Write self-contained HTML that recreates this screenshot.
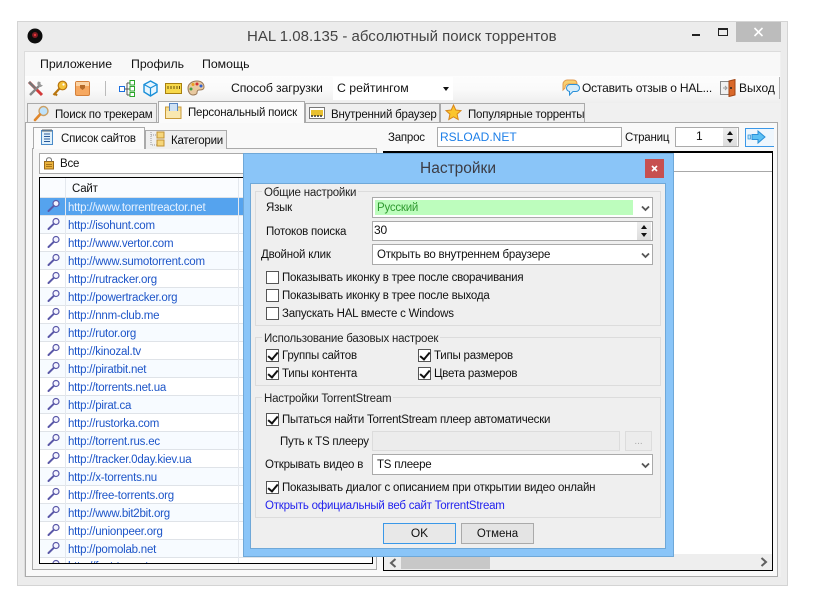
<!DOCTYPE html>
<html><head><meta charset="utf-8"><style>
html,body{margin:0;padding:0;background:#fff;width:821px;height:610px;overflow:hidden}
body{position:relative;font:11.5px/16px "Liberation Sans",sans-serif;color:#111}
div,svg{position:absolute;box-sizing:border-box}
.t{white-space:nowrap;height:16px;letter-spacing:-.22px;margin-top:1px}
.w{font-size:12.3px;letter-spacing:0;margin-top:0}
.n{margin-top:0}
.b{border:1px solid #aaa;background:#fff}
.u{color:#1d55c8}
.cb{width:13px;height:13px;border:1px solid #555;background:#fff}
.ck:after{content:"";position:absolute;left:3px;top:0px;width:4px;height:8px;border:solid #111;border-width:0 2px 2px 0;transform:rotate(40deg)}
.g{border:1px solid #dcdcdc}
.gl{background:#efefef;padding:0 2px;color:#222}
.row{left:40px;width:332px;height:18px;border-bottom:1px solid #dfe3e8}
</style></head><body>
<svg width="0" height="0" style="position:absolute"><defs>
<symbol id="m" viewBox="0 0 16 16"><circle cx="11" cy="4.500" r="3" fill="#f4f4ff" stroke="#5a58a8" stroke-width="1.200"/><path d="M8.800 6.800L3.500 12" stroke="#5a58a8" stroke-width="2" stroke-linecap="round"/></symbol>
</defs></svg>

<!-- window -->
<div style="left:17px;top:21px;width:771px;height:565px;background:#ececec;border:1px solid #d4d4d4"></div>
<svg style="left:27px;top:28px" width="16" height="16"><circle cx="8" cy="8" r="7.500" fill="#0c0c0c"/><circle cx="8" cy="7" r="3" fill="#7c1a22"/><circle cx="8" cy="7" r="1.200" fill="#e23a3a"/></svg>
<div class="t n" style="left:247px;top:27px;font-size:15px;line-height:20px;height:20px;color:#444;width:312px;letter-spacing:0">HAL 1.08.135 - абсолютный поиск торрентов</div>
<div style="left:692px;top:34px;width:8px;height:2px;background:#222"></div>
<div style="left:718px;top:28px;width:10px;height:8px;border:1px solid #222;border-top-width:2px"></div>
<div style="left:736px;top:22px;width:45px;height:20px;background:#bcbcbc"></div>
<svg style="left:753px;top:27px" width="11" height="10"><path d="M1.500 1L9.500 9M9.500 1L1.500 9" stroke="#fff" stroke-width="1.600"/></svg>

<!-- client -->
<div style="left:24px;top:51px;width:757px;height:526px;background:#f0f0f0;border-top:1px solid #dcdcdc;border-left:1px solid #dcdcdc"></div>
<div style="left:25px;top:52px;width:755px;height:24px;background:#f8f8f8"></div>
<div class="t w" style="left:40px;top:56px">Приложение</div>
<div class="t w" style="left:131px;top:56px">Профиль</div>
<div class="t w" style="left:202px;top:56px">Помощь</div>

<!-- toolbar -->
<div style="left:25px;top:76px;width:755px;height:27px;background:linear-gradient(#fdfdfd,#fafafa 50%,#eeeeee)"></div>
<svg style="left:27px;top:80px" width="18" height="18"><path d="M2 2L15 15" stroke="#d23a3a" stroke-width="3"/><path d="M2 2L8 8" stroke="#777" stroke-width="2.400"/><path d="M3 15L13 5" stroke="#888" stroke-width="2.400"/><path d="M11 1.500a3.500 3.500 0 0 0 3 5.500l2-2-1.500 0-1-1 0-2z" fill="#999"/></svg>
<svg style="left:51px;top:80px" width="17" height="18"><circle cx="11.500" cy="5.500" r="4.300" fill="#f5c23a" stroke="#b8750f" stroke-width="1.200"/><circle cx="12.500" cy="4.500" r="1.100" fill="#fff"/><path d="M8.500 8.500L2.500 15M4 13.500l2 2" stroke="#b8750f" stroke-width="2.200"/></svg>
<svg style="left:75px;top:81px" width="15" height="15"><rect x=".5" y=".5" width="14" height="14" rx="1.500" fill="#f6a860" stroke="#d4803a"/><rect x="1" y="1" width="13" height="4" fill="#fbd3a4"/><path d="M5 4h5v3l-2.500 2-2.500-2z" fill="#b56a28"/></svg>
<div style="left:105px;top:81px;width:1px;height:15px;background:#bbb"></div>
<svg style="left:119px;top:80px" width="16" height="17"><rect x=".5" y="6.500" width="5" height="5" fill="#fff" stroke="#1a6fe0"/><path d="M5.500 9H8M8 3v12M8 3h3M8 9h3M8 15h3" stroke="#555" fill="none"/><rect x="11" y=".5" width="4.500" height="4.500" fill="#fff" stroke="#2aa52a"/><rect x="11" y="6.500" width="4.500" height="4.500" fill="#fff" stroke="#2aa52a"/><rect x="11" y="12.500" width="4.500" height="4" fill="#fff" stroke="#2aa52a"/></svg>
<svg style="left:143px;top:80px" width="15" height="17"><path d="M7.500 1L14 4.500V12L7.500 16 1 12V4.500z" fill="#e8f6ff" stroke="#1a8fd8" stroke-width="1.400"/><path d="M1 4.500L7.500 8 14 4.500M7.500 8V16" fill="none" stroke="#1a8fd8" stroke-width="1.200"/></svg>
<svg style="left:165px;top:83px" width="17" height="11"><rect x=".5" y=".5" width="16" height="10" fill="#f7d84a" stroke="#a88010"/><path d="M3 3v3M6 3v3M9 3v3M12 3v3M14.500 3v3" stroke="#6a5008"/></svg>
<svg style="left:187px;top:80px" width="18" height="16"><path d="M1 8c0-4 4-7 9-7s7 3 7 6-3 3-5 3-2 2-2 3-2 2-4 2c-3 0-5-3-5-7z" fill="#e8c9a0" stroke="#9a7a58"/><circle cx="10" cy="4" r="1.500" fill="#d83030"/><circle cx="14" cy="6" r="1.500" fill="#3060d0"/><circle cx="6" cy="4.500" r="1.500" fill="#e8a020"/><circle cx="4" cy="9" r="1.500" fill="#40a040"/></svg>
<div class="t w" style="left:231px;top:80px;letter-spacing:-.13px">Способ загрузки</div>
<div style="left:333px;top:77px;width:120px;height:23px;background:#fff"></div>
<div class="t w" style="left:337px;top:80px">С рейтингом</div>
<div style="left:443px;top:87px;border:3.500px solid transparent;border-top:4px solid #111;border-bottom:0"></div>
<svg style="left:562px;top:79px" width="18" height="18"><path d="M5 1h6c3 0 4 2 4 4H7c-3 0-4 2-4 4L1 11V5c0-2 2-4 4-4z" fill="#f8d070" stroke="#e09a50"/><path d="M8 5.500h6c2 0 3.500 1.500 3.500 3.500s-1.500 3.500-3.500 3.500h-3L7.500 16v-3.500C5.500 12 4.500 10.500 4.500 9S6 5.500 8 5.500z" fill="#d4ecfb" stroke="#2a90d8"/></svg>
<div class="t n" style="left:582px;top:80px;width:132px;font-size:12px;letter-spacing:-.2px">Оставить отзыв о HAL...</div>
<svg style="left:720px;top:79px" width="17" height="18"><rect x=".5" y="2.500" width="9" height="13" fill="#f0f0f0" stroke="#888"/><path d="M3 9h3M5 7l2 2-2 2" stroke="#999" fill="none"/><path d="M9 2l6-1.500V16l-6 1.500z" fill="#d9682a" stroke="#a04414"/><circle cx="11" cy="9" r="1" fill="#222"/></svg>
<div class="t n" style="left:739px;top:80px;font-size:12px;letter-spacing:0">Выход</div>
<div style="left:779px;top:77px;width:1px;height:22px;background:#b4b4b4"></div>

<!-- main tab panel -->
<div style="left:25px;top:122px;width:753px;height:455px;background:#f9f9f9;border:1px solid #aaa"></div>
<div style="left:27px;top:103px;width:130px;height:19px;background:#efefef;border:1px solid #aaa;border-bottom:0"></div>
<svg style="left:33px;top:105px" width="17" height="17"><circle cx="10.500" cy="6" r="4.500" fill="#bfe2fa" stroke="#caa066" stroke-width="1.400"/><path d="M7 9.500L2 15" stroke="#e0862a" stroke-width="2.600" stroke-linecap="round"/></svg>
<div class="t" style="left:55px;top:106px">Поиск по трекерам</div>
<div style="left:158px;top:101px;width:147px;height:22px;background:#fbfbfb;border:1px solid #aaa;border-bottom:0"></div>
<svg style="left:165px;top:103px" width="17" height="16"><rect x=".5" y="4" width="15.500" height="11.500" fill="#f6dc90" stroke="#c89a38"/><rect x="4.500" y=".5" width="8" height="9" fill="#cfe2f5" stroke="#5a86c0"/><rect x="1" y="8" width="14.500" height="7" fill="#f9e8b0"/></svg>
<div class="t" style="left:188px;top:104px">Персональный поиск</div>
<div style="left:305px;top:103px;width:135px;height:19px;background:#efefef;border:1px solid #aaa;border-bottom:0"></div>
<svg style="left:309px;top:107px" width="16" height="12"><rect x=".5" y=".5" width="15" height="11" fill="#fff" stroke="#777"/><rect x="2" y="3" width="12" height="6" fill="#e8c030"/><path d="M2 9h12" stroke="#333" stroke-width="1.500" stroke-dasharray="2 1"/></svg>
<div class="t" style="left:331px;top:106px">Внутренний браузер</div>
<div style="left:440px;top:103px;width:145px;height:19px;background:#efefef;border:1px solid #aaa;border-bottom:0"></div>
<svg style="left:445px;top:104px" width="17" height="17"><path d="M8.500 1l2.300 5 5.200.6-3.900 3.500 1.100 5.400-4.700-2.700-4.700 2.700 1.100-5.400L1 6.600 6.200 6z" fill="#fbc52c" stroke="#d8861a"/></svg>
<div class="t" style="left:468px;top:106px">Популярные торренты</div>

<!-- left subtabs -->
<div style="left:32px;top:148px;width:345px;height:422px;background:#f6f6f6;border:1px solid #aaa"></div>
<div style="left:145px;top:130px;width:82px;height:19px;background:#efefef;border:1px solid #aaa;border-bottom:0"></div>
<div style="left:33px;top:127px;width:112px;height:22px;background:#fbfbfb;border:1px solid #aaa;border-bottom:0"></div>
<svg style="left:41px;top:129px" width="13" height="16"><rect x=".5" y="1.500" width="11" height="14" fill="#dff0fb" stroke="#4a8ac8"/><path d="M3 5h6M3 7.500h6M3 10h6M3 12.500h6" stroke="#2a5a9a"/><path d="M2 0v3M4 0v3M6 0v3M8 0v3M10 0v3" stroke="#666"/></svg>
<div class="t" style="left:61px;top:130px">Список сайтов</div>
<svg style="left:150px;top:131px" width="15" height="16"><path d="M1 1v13h6M1 4h6" stroke="#999" stroke-dasharray="1 1" fill="none"/><rect x="7" y="1" width="7" height="6" fill="#f6d67a" stroke="#c09030"/><rect x="7" y="9" width="7" height="6" fill="#f6d67a" stroke="#c09030"/></svg>
<div class="t" style="left:171px;top:132px">Категории</div>
<div class="b" style="left:39px;top:153px;width:334px;height:21px"></div>
<svg style="left:44px;top:157px" width="11" height="13"><rect x=".5" y="4.500" width="9" height="7.500" fill="#eab33c" stroke="#9a6a1a"/><path d="M2.500 4.500V3c0-3 5-3 5 0v1.500" fill="none" stroke="#777"/><path d="M2 7.500h6M2 9.500h6" stroke="#a8741c"/></svg>
<div class="t" style="left:60px;top:155px">Все</div>

<!-- left grid -->
<div style="left:39px;top:177px;width:334px;height:387px;background:#fff;border:1px solid #000;overflow:hidden"></div>
<div style="left:40px;top:178px;width:332px;height:20px;background:#fafcff;border-bottom:1px solid #dfe3e8"></div>
<div class="t" style="left:72px;top:180px">Сайт</div>

<div class="row" style="top:198px;background:#55a3ee"></div>
<div class="row" style="top:216px;background:#f7fbff"></div>
<div class="row" style="top:234px"></div>
<div class="row" style="top:252px;background:#f7fbff"></div>
<div class="row" style="top:270px"></div>
<div class="row" style="top:288px;background:#f7fbff"></div>
<div class="row" style="top:306px"></div>
<div class="row" style="top:324px;background:#f7fbff"></div>
<div class="row" style="top:342px"></div>
<div class="row" style="top:360px;background:#f7fbff"></div>
<div class="row" style="top:378px"></div>
<div class="row" style="top:396px;background:#f7fbff"></div>
<div class="row" style="top:414px"></div>
<div class="row" style="top:432px;background:#f7fbff"></div>
<div class="row" style="top:450px"></div>
<div class="row" style="top:468px;background:#f7fbff"></div>
<div class="row" style="top:486px"></div>
<div class="row" style="top:504px;background:#f7fbff"></div>
<div class="row" style="top:522px"></div>
<div class="row" style="top:540px;background:#f7fbff"></div>
<div style="left:65px;top:178px;width:1px;height:385px;background:#e4e8ee"></div>
<div style="left:238px;top:178px;width:1px;height:385px;background:#e4e8ee"></div>

<svg style="left:45px;top:199px" width="16" height="16"><use href="#m"/></svg>
<svg style="left:45px;top:217px" width="16" height="16"><use href="#m"/></svg>
<svg style="left:45px;top:235px" width="16" height="16"><use href="#m"/></svg>
<svg style="left:45px;top:253px" width="16" height="16"><use href="#m"/></svg>
<svg style="left:45px;top:271px" width="16" height="16"><use href="#m"/></svg>
<svg style="left:45px;top:289px" width="16" height="16"><use href="#m"/></svg>
<svg style="left:45px;top:307px" width="16" height="16"><use href="#m"/></svg>
<svg style="left:45px;top:325px" width="16" height="16"><use href="#m"/></svg>
<svg style="left:45px;top:343px" width="16" height="16"><use href="#m"/></svg>
<svg style="left:45px;top:361px" width="16" height="16"><use href="#m"/></svg>
<svg style="left:45px;top:379px" width="16" height="16"><use href="#m"/></svg>
<svg style="left:45px;top:397px" width="16" height="16"><use href="#m"/></svg>
<svg style="left:45px;top:415px" width="16" height="16"><use href="#m"/></svg>
<svg style="left:45px;top:433px" width="16" height="16"><use href="#m"/></svg>
<svg style="left:45px;top:451px" width="16" height="16"><use href="#m"/></svg>
<svg style="left:45px;top:469px" width="16" height="16"><use href="#m"/></svg>
<svg style="left:45px;top:487px" width="16" height="16"><use href="#m"/></svg>
<svg style="left:45px;top:505px" width="16" height="16"><use href="#m"/></svg>
<svg style="left:45px;top:523px" width="16" height="16"><use href="#m"/></svg>
<svg style="left:45px;top:541px" width="16" height="16"><use href="#m"/></svg>

<div class="t" style="left:68px;top:199px;color:#e8f2ff">http://www.torrentreactor.net</div>
<div class="t u" style="left:68px;top:217px">http://isohunt.com</div>
<div class="t u" style="left:68px;top:235px">http://www.vertor.com</div>
<div class="t u" style="left:68px;top:253px">http://www.sumotorrent.com</div>
<div class="t u" style="left:68px;top:271px">http://rutracker.org</div>
<div class="t u" style="left:68px;top:289px">http://powertracker.org</div>
<div class="t u" style="left:68px;top:307px">http://nnm-club.me</div>
<div class="t u" style="left:68px;top:325px">http://rutor.org</div>
<div class="t u" style="left:68px;top:343px">http://kinozal.tv</div>
<div class="t u" style="left:68px;top:361px">http://piratbit.net</div>
<div class="t u" style="left:68px;top:379px">http://torrents.net.ua</div>
<div class="t u" style="left:68px;top:397px">http://pirat.ca</div>
<div class="t u" style="left:68px;top:415px">http://rustorka.com</div>
<div class="t u" style="left:68px;top:433px">http://torrent.rus.ec</div>
<div class="t u" style="left:68px;top:451px">http://tracker.0day.kiev.ua</div>
<div class="t u" style="left:68px;top:469px">http://x-torrents.nu</div>
<div class="t u" style="left:68px;top:487px">http://free-torrents.org</div>
<div class="t u" style="left:68px;top:505px">http://www.bit2bit.org</div>
<div class="t u" style="left:68px;top:523px">http://unionpeer.org</div>
<div class="t u" style="left:68px;top:541px">http://pomolab.net</div>
<div style="left:45px;top:559px;width:16px;height:4px;overflow:hidden"><svg style="left:0;top:0" width="16" height="16"><use href="#m"/></svg></div>
<div style="left:68px;top:559px;width:100px;height:4px;overflow:hidden"><div class="t u n" style="left:0;top:0">http://fast-torrent</div></div>

<!-- right -->
<div class="t n" style="left:388px;top:130px">Запрос</div>
<div class="b" style="left:437px;top:127px;width:185px;height:20px"></div>
<div class="t n" style="left:440px;top:129px;color:#1d7fe8;font-size:12px;letter-spacing:0">RSLOAD.NET</div>
<div class="t n" style="left:625px;top:130px">Страниц</div>
<div class="b" style="left:675px;top:127px;width:64px;height:20px"></div>
<div class="t n" style="left:696px;top:128px;font-size:12px">1</div>
<div style="left:723px;top:128px;width:14px;height:18px;background:linear-gradient(#eee,#ddd)"></div>
<div style="left:727px;top:131px;border:3px solid transparent;border-bottom:4px solid #111;border-top:0"></div>
<div style="left:727px;top:139px;border:3px solid transparent;border-top:4px solid #111;border-bottom:0"></div>
<div style="left:745px;top:128px;width:29px;height:19px;background:#eef6fd;border:1px solid #3a98e8;border-right:0"></div>
<svg style="left:747px;top:130px" width="20" height="15"><rect x="1" y="5" width="2.500" height="4" fill="#bfe4fa" stroke="#2a90d8" stroke-width=".7"/><path d="M5 4.500h6V1l7 6-7 6V9.500H5z" fill="#5cc0f4" stroke="#2a90d8"/></svg>
<div style="left:383px;top:151px;width:390px;height:420px;background:#fff;border:1px solid #000;border-width:2px 1px 1px 1px"></div>
<div style="left:384px;top:171px;width:388px;height:1px;background:#a8a8a8"></div>
<div style="left:384px;top:554px;width:388px;height:16px;background:#eee"></div>
<svg style="left:389px;top:558px" width="8" height="10"><path d="M6.500 1L2 5 6.500 9" fill="none" stroke="#606060" stroke-width="2"/></svg>
<div style="left:401px;top:557px;width:89px;height:12px;background:#c8c8c8"></div>
<svg style="left:760px;top:557px" width="8" height="10"><path d="M1.500 1L6 5 1.500 9" fill="none" stroke="#606060" stroke-width="2"/></svg>

<!-- dialog -->
<div style="left:243px;top:153px;width:431px;height:404px;background:#8ac5f8;border:1px solid #6fa8d8"></div>
<div class="t n" style="left:420px;top:159px;font-size:15.500px;line-height:20px;height:20px;color:#3c3c44;letter-spacing:0">Настройки</div>
<div style="left:645px;top:159px;width:19px;height:19px;background:#c75050"></div>
<svg style="left:651px;top:165px" width="7" height="7"><path d="M1 1L6 6M6 1L1 6" stroke="#fff" stroke-width="1.600"/></svg>
<div style="left:250px;top:183px;width:416px;height:366px;background:#efefef;border:1px solid #6fa8d8"></div>

<div class="g" style="left:255px;top:191px;width:406px;height:135px"></div>
<div class="t gl" style="left:262px;top:184px">Общие настройки</div>
<div class="t" style="left:266px;top:199px">Язык</div>
<div class="b" style="left:372px;top:197px;width:281px;height:21px"></div>
<div style="left:375px;top:200px;width:258px;height:15px;background:#bdfdbd"></div>
<div class="t" style="left:377px;top:199px;color:#2f9a2f">Русский</div>
<svg style="left:641px;top:205px" width="9" height="7"><path d="M1 1.500L4.500 5 8 1.500" fill="none" stroke="#555" stroke-width="1.800"/></svg>
<div class="t" style="left:266px;top:223px">Потоков поиска</div>
<div class="b" style="left:372px;top:221px;width:281px;height:20px"></div>
<div class="t n" style="left:374px;top:222px;font-size:12px">30</div>
<div style="left:637px;top:222px;width:14px;height:18px;background:linear-gradient(#eee,#ddd)"></div>
<div style="left:641px;top:225px;border:3px solid transparent;border-bottom:4px solid #111;border-top:0"></div>
<div style="left:641px;top:233px;border:3px solid transparent;border-top:4px solid #111;border-bottom:0"></div>
<div class="t" style="left:261px;top:246px">Двойной клик</div>
<div class="b" style="left:372px;top:244px;width:281px;height:21px"></div>
<div class="t" style="left:377px;top:246px">Открыть во внутреннем браузере</div>
<svg style="left:641px;top:252px" width="9" height="7"><path d="M1 1.500L4.500 5 8 1.500" fill="none" stroke="#555" stroke-width="1.800"/></svg>
<div class="cb" style="left:266px;top:271px"></div><div class="t" style="left:282px;top:269px">Показывать иконку в трее после сворачивания</div>
<div class="cb" style="left:266px;top:289px"></div><div class="t" style="left:282px;top:287px">Показывать иконку в трее после выхода</div>
<div class="cb" style="left:266px;top:307px"></div><div class="t" style="left:282px;top:305px">Запускать HAL вместе с Windows</div>

<div class="g" style="left:255px;top:337px;width:406px;height:49px"></div>
<div class="t gl" style="left:262px;top:330px">Использование базовых настроек</div>
<div class="cb ck" style="left:266px;top:349px"></div><div class="t" style="left:282px;top:347px">Группы сайтов</div>
<div class="cb ck" style="left:418px;top:349px"></div><div class="t" style="left:434px;top:347px">Типы размеров</div>
<div class="cb ck" style="left:266px;top:367px"></div><div class="t" style="left:282px;top:365px">Типы контента</div>
<div class="cb ck" style="left:418px;top:367px"></div><div class="t" style="left:434px;top:365px">Цвета размеров</div>

<div class="g" style="left:255px;top:397px;width:406px;height:121px"></div>
<div class="t gl" style="left:262px;top:390px">Настройки TorrentStream</div>
<div class="cb ck" style="left:266px;top:413px"></div><div class="t" style="left:282px;top:411px">Пытаться найти TorrentStream плеер автоматически</div>
<div class="t" style="left:280px;top:433px">Путь к TS плееру</div>
<div style="left:372px;top:431px;width:248px;height:20px;background:#ececec;border:1px solid #dcdcdc"></div>
<div style="left:625px;top:431px;width:27px;height:20px;background:#ececec;border:1px solid #dcdcdc;color:#aaa;text-align:center;line-height:20px;font-size:10px">...</div>
<div class="t" style="left:265px;top:456px">Открывать видео в</div>
<div class="b" style="left:372px;top:454px;width:281px;height:21px"></div>
<div class="t" style="left:377px;top:456px">TS плеере</div>
<svg style="left:641px;top:462px" width="9" height="7"><path d="M1 1.500L4.500 5 8 1.500" fill="none" stroke="#555" stroke-width="1.800"/></svg>
<div class="cb ck" style="left:266px;top:481px"></div><div class="t" style="left:282px;top:479px">Показывать диалог с описанием при открытии видео онлайн</div>
<div class="t" style="left:265px;top:497px;color:#2222ee">Открыть официальный веб сайт TorrentStream</div>
<div style="left:383px;top:523px;width:73px;height:21px;background:#e8e8e8;border:1px solid #3a98e8;text-align:center;line-height:19px;font-size:12px">OK</div>
<div style="left:461px;top:523px;width:73px;height:21px;background:#e4e4e4;border:1px solid #aaa;text-align:center;line-height:21px">Отмена</div>
</body></html>
